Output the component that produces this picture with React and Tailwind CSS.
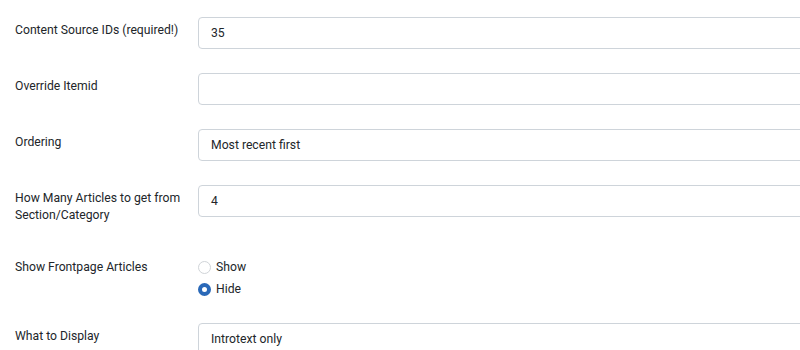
import React from "react";

function Row({ label, children, className = "" }) {
  return (
    <div className={"grid grid-cols-[183px_1fr] " + className}>
      <div className="pt-[5px] pr-2 text-[12.2px] leading-[17px] text-[#22262a]">{label}</div>
      <div>{children}</div>
    </div>
  );
}

function Input({ value }) {
  return (
    <div className="h-[32px] w-[700px] rounded-[4px] border border-[#ced4da] bg-white px-[12px] flex items-center text-[12.2px] text-[#22262a]">
      {value}
    </div>
  );
}

function Radio({ checked, label }) {
  return (
    <div className="flex items-center h-[22px]">
      {checked ? (
        <span className="w-[13px] h-[13px] rounded-full border-[4px] border-[#2a69b8] bg-white" />
      ) : (
        <span className="w-[13px] h-[13px] rounded-full border border-[#d0d4d8] bg-white" />
      )}
      <span className="ml-[5px] text-[12.2px] text-[#22262a]">{label}</span>
    </div>
  );
}

export default function App() {
  return (
    <div
      className="w-[800px] h-[350px] overflow-hidden bg-white pt-[17px] pl-[15px] flex flex-col gap-[24px]"
      style={{ fontFamily: "Roboto, 'Noto Sans', sans-serif" }}
    >
      <Row label="Content Source IDs (required!)">
        <Input value="35" />
      </Row>
      <Row label="Override Itemid">
        <Input value="" />
      </Row>
      <Row label="Ordering">
        <Input value="Most recent first" />
      </Row>
      <div className="grid grid-cols-[183px_1fr] h-[32px]">
        <div className="pt-[5px] pr-2 text-[12.2px] leading-[17px] text-[#22262a]">How Many Articles to get from<br />Section/Category</div>
        <div><Input value="4" /></div>
      </div>
      <div className="grid grid-cols-[183px_1fr] pt-[15px]">
        <div className="pt-[2px] text-[12.2px] leading-[18px] text-[#22262a]">Show Frontpage Articles</div>
        <div className="flex flex-col">
          <Radio label="Show" />
          <Radio checked label="Hide" />
        </div>
      </div>
      <Row label="What to Display" className="-mt-[1px]">
        <Input value="Introtext only" />
      </Row>
    </div>
  );
}
